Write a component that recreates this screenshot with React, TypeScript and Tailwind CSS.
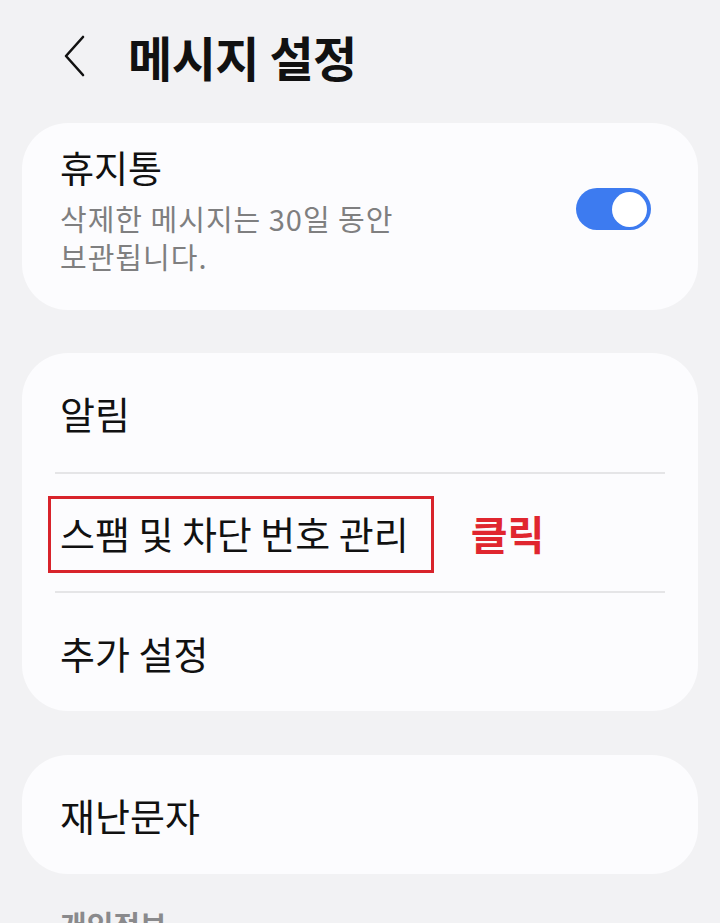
import React from "react";

const font = { fontFamily: '"Noto Sans CJK KR", "Noto Sans", sans-serif' };

function Divider() {
  return <div className="mx-[33px] h-[2px] bg-[#e5e5e7]" />;
}

export default function App() {
  return (
    <div
      className="w-[720px] h-[923px] overflow-hidden bg-[#f2f2f4] text-[#111111]"
      style={font}
    >
      {/* Header */}
      <div className="h-[123px] pt-[30px] flex items-start">
        <div className="ml-[62px] h-[52px] w-[26px] flex items-center">
          <svg width="26" height="44" viewBox="0 0 26 44" fill="none">
            <path
              d="M21 3 L4 22 L21 41"
              stroke="#111"
              strokeWidth="2.6"
              strokeLinecap="round"
              strokeLinejoin="round"
            />
          </svg>
        </div>
        <div className="ml-[40px] text-[48px] leading-[52px] font-bold tracking-[-0.5px]">
          메시지 설정
        </div>
      </div>

      {/* Card 1 */}
      <div className="mx-[22px] rounded-[46px] bg-[#fcfcfe] pt-[22px] pb-[35px] pl-[38px] pr-[47px] flex items-start">
        <div className="flex-1">
          <div className="text-[37px] leading-[44px]">휴지통</div>
          <div className="mt-[10px] text-[29px] leading-[38px] tracking-[1px] text-[#7f7f80]">
            삭제한 메시지는 30일 동안
            <br />
            보관됩니다.
          </div>
        </div>
        <div className="mt-[43px] w-[75px] h-[42px] rounded-full bg-[#3d7bf0] flex items-center justify-end pr-[4px]">
          <div className="w-[35px] h-[35px] rounded-full bg-white" />
        </div>
      </div>

      {/* Card 2 */}
      <div className="mx-[22px] mt-[43px] rounded-[46px] bg-[#fcfcfe]">
        <div className="h-[119px] pl-[38px] flex items-center text-[38px]">
          알림
        </div>
        <Divider />
        <div className="relative h-[117px] pl-[38px] flex items-center text-[38px]">
          <span>스팸 및 차단 번호 관리</span>
          <span className="ml-[62px] font-bold text-[#e0262f] text-[40px]">
            클릭
          </span>
          <div className="absolute left-[26px] top-[22px] w-[386px] h-[77px] border-[3px] border-[#d8232b]" />
        </div>
        <Divider />
        <div className="h-[118px] pl-[38px] flex items-center text-[38px]">
          추가 설정
        </div>
      </div>

      {/* Card 3 */}
      <div className="mx-[22px] mt-[44px] rounded-[46px] bg-[#fcfcfe] h-[119px] pl-[38px] flex items-center text-[38px]">
        재난문자
      </div>

      <div className="mt-[30px] pl-[60px] text-[29px] leading-[40px] font-bold text-[#8a8a8c]">
        개인정보
      </div>
    </div>
  );
}
